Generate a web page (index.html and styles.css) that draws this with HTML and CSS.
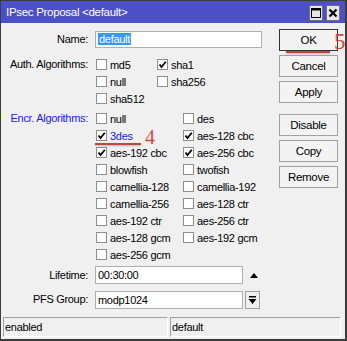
FILE: index.html
```
<!DOCTYPE html>
<html lang="en">
<head>
    <meta charset="UTF-8">
    <title>IPsec Proposal</title>
    <link rel="stylesheet" href="styles.css">
</head>
<body>
    <div class="window">
        <div class="titlebar">
            <span class="title">IPsec Proposal &lt;default&gt;</span>
            <div class="win-btns">
                <span class="wbtn">
                    <svg width="10" height="10" viewBox="0 0 10 10"><rect x="0.5" y="0.5" width="9" height="9" fill="none" stroke="#000" stroke-width="1"/><line x1="0" y1="1.5" x2="10" y2="1.5" stroke="#000" stroke-width="2"/></svg>
                </span>
                <span class="wbtn">
                    <svg width="10" height="10" viewBox="0 0 10 10"><path d="M1.5 1.5 L8.5 8.5 M8.5 1.5 L1.5 8.5" stroke="#000" stroke-width="2.2"/></svg>
                </span>
            </div>
        </div>

        <div class="content">
            <div class="form">
                <div class="row name-row">
                    <label class="lbl">Name:</label>
                    <div class="input name-input"><span class="sel">default</span></div>
                </div>

                <div class="row auth-row">
                    <label class="lbl">Auth. Algorithms:</label>
                    <div class="checks auth-checks">
                        <div class="chk"><span class="box"></span>md5</div>
                        <div class="chk"><span class="box on"><svg width="9" height="9" viewBox="0 0 9 9"><polyline points="1.5,4.5 3.5,7 7.8,1.8" fill="none" stroke="#000" stroke-width="1.8"/></svg></span>sha1</div>
                        <div class="chk"><span class="box"></span>null</div>
                        <div class="chk"><span class="box"></span>sha256</div>
                        <div class="chk"><span class="box"></span>sha512</div>
                    </div>
                </div>

                <div class="row encr-row">
                    <label class="lbl blue">Encr. Algorithms:</label>
                    <div class="checks encr-checks">
                        <div class="chk"><span class="box"></span>null</div>
                        <div class="chk"><span class="box"></span>des</div>
                        <div class="chk blue"><span class="box on"><svg width="9" height="9" viewBox="0 0 9 9"><polyline points="1.5,4.5 3.5,7 7.8,1.8" fill="none" stroke="#000" stroke-width="1.8"/></svg></span>3des</div>
                        <div class="chk"><span class="box on"><svg width="9" height="9" viewBox="0 0 9 9"><polyline points="1.5,4.5 3.5,7 7.8,1.8" fill="none" stroke="#000" stroke-width="1.8"/></svg></span>aes-128 cbc</div>
                        <div class="chk"><span class="box on"><svg width="9" height="9" viewBox="0 0 9 9"><polyline points="1.5,4.5 3.5,7 7.8,1.8" fill="none" stroke="#000" stroke-width="1.8"/></svg></span>aes-192 cbc</div>
                        <div class="chk"><span class="box on"><svg width="9" height="9" viewBox="0 0 9 9"><polyline points="1.5,4.5 3.5,7 7.8,1.8" fill="none" stroke="#000" stroke-width="1.8"/></svg></span>aes-256 cbc</div>
                        <div class="chk"><span class="box"></span>blowfish</div>
                        <div class="chk"><span class="box"></span>twofish</div>
                        <div class="chk"><span class="box"></span>camellia-128</div>
                        <div class="chk"><span class="box"></span>camellia-192</div>
                        <div class="chk"><span class="box"></span>camellia-256</div>
                        <div class="chk"><span class="box"></span>aes-128 ctr</div>
                        <div class="chk"><span class="box"></span>aes-192 ctr</div>
                        <div class="chk"><span class="box"></span>aes-256 ctr</div>
                        <div class="chk"><span class="box"></span>aes-128 gcm</div>
                        <div class="chk"><span class="box"></span>aes-192 gcm</div>
                        <div class="chk"><span class="box"></span>aes-256 gcm</div>
                    </div>
                    <!-- annotation over 3des -->
                    <span class="mark-line line-3des"></span>
                    <span class="mark-num num-4">4</span>
                </div>

                <div class="row life-row">
                    <label class="lbl">Lifetime:</label>
                    <div class="input short-input">00:30:00</div>
                    <span class="up-arrow"></span>
                </div>

                <div class="row pfs-row">
                    <label class="lbl">PFS Group:</label>
                    <div class="input short-input">modp1024</div>
                    <span class="drop-btn">
                        <svg width="9" height="9" viewBox="0 0 9 9"><rect x="1" y="0" width="7" height="1.5" fill="#000"/><polygon points="0.5,3 8.5,3 4.5,8" fill="#000"/></svg>
                    </span>
                </div>
            </div>

            <div class="buttons">
                <div class="btn btn-ok">OK</div>
                <div class="btn">Cancel</div>
                <div class="btn">Apply</div>
                <div class="btn sep">Disable</div>
                <div class="btn">Copy</div>
                <div class="btn">Remove</div>
                <span class="mark-line line-ok"></span>
                <span class="mark-num num-5">5</span>
            </div>
        </div>

        <div class="statusbar">
            <div class="panel panel-left">enabled</div>
            <div class="panel panel-right">default</div>
        </div>
    </div>
</body>
</html>
```

FILE: styles.css
```
body {
    margin: 0;
    font-family: "Liberation Sans", Arial, sans-serif;
    font-size: 11px;
    letter-spacing: -0.3px;
    color: #000;
    background: #fff;
}
.window {
    width: 347px;
    height: 341px;
    box-sizing: border-box;
    background: #f0f0f0;
    border-top: 1px solid #3c3c3c;
    border-left: 1px solid #3c3c3c;
    border-right: 2px solid #3c3c3c;
    border-bottom: 2px solid #3c3c3c;
    display: flex;
    flex-direction: column;
}
.titlebar {
    height: 22px;
    background: #4c50c6;
    display: flex;
    align-items: center;
    justify-content: space-between;
    padding: 0 5px 0 5px;
}
.title {
    color: #fff;
    font-size: 11.5px;
}
.win-btns {
    display: flex;
    gap: 3px;
    margin-top: 2px;
}
.wbtn {
    width: 12px;
    height: 14px;
    background: #e6e6e6;
    border: 1px solid #707070;
    display: flex;
    align-items: center;
    justify-content: center;
}
.content {
    display: flex;
}
.form {
    flex: 1;
    padding-top: 8px;
}
.row {
    display: flex;
    align-items: flex-start;
    position: relative;
}
.lbl {
    width: 87px;
    flex: none;
    text-align: right;
    margin-right: 7px;
    line-height: 17px;
}
.blue {
    color: #1a1ae6;
}
.input {
    height: 17px;
    box-sizing: border-box;
    background: #fff;
    border: 1px solid #b0b0b0;
    padding: 0 2px;
    line-height: 15px;
}
.name-input {
    width: 167px;
}
.sel {
    background: #3399ff;
    color: #fff;
    padding: 0 1px;
}
.short-input {
    width: 148px;
    height: 18px;
    line-height: 16px;
}
.auth-row {
    margin-top: 8px;
}
.encr-row {
    margin-top: 3px;
}
.checks {
    display: grid;
    grid-auto-rows: 17px;
}
.auth-checks {
    grid-template-columns: 61px 61px;
}
.encr-checks {
    grid-template-columns: 87px 87px;
}
.chk {
    display: flex;
    align-items: center;
    gap: 3px;
    padding-left: 1px;
}
.box {
    width: 11px;
    height: 11px;
    box-sizing: border-box;
    background: #fff;
    border: 1px solid #8e8e8e;
    display: flex;
    align-items: center;
    justify-content: center;
    flex: none;
}
.life-row {
    margin-top: 3px;
    align-items: center;
}
.up-arrow {
    width: 0;
    height: 0;
    margin-left: 7px;
    border-left: 4px solid transparent;
    border-right: 4px solid transparent;
    border-bottom: 5px solid #000;
}
.pfs-row {
    margin-top: 7px;
}
.drop-btn {
    width: 15px;
    height: 18px;
    box-sizing: border-box;
    margin-left: 2px;
    border: 1px solid #a0a0a0;
    background: #f0f0f0;
    display: flex;
    align-items: center;
    justify-content: center;
}
.buttons {
    width: 59px;
    margin-right: 7px;
    padding-top: 6px;
    display: flex;
    flex-direction: column;
    gap: 4px;
    position: relative;
}
.btn {
    height: 22px;
    box-sizing: border-box;
    border: 1px solid #a0a0a0;
    background: #f3f3f3;
    display: flex;
    align-items: center;
    justify-content: center;
    font-size: 11.5px;
}
.btn-ok {
    border-color: #333;
}
.btn.sep {
    margin-top: 7px;
}
.statusbar {
    display: flex;
    gap: 2px;
    margin-top: 8px;
    padding-left: 2px;
}
.panel {
    height: 20px;
    box-sizing: border-box;
    border-top: 1px solid #a0a0a0;
    border-left: 1px solid #a0a0a0;
    border-right: 1px solid #fff;
    border-bottom: 1px solid #fff;
    padding-left: 1px;
    line-height: 18px;
}
.panel-left {
    width: 165px;
}
.panel-right {
    width: 171px;
}

/* red annotations drawn over the dialog */
.mark-line {
    position: absolute;
    height: 2px;
    background: #c2463a;
    box-shadow: 0 1px 2px rgba(0, 0, 0, 0.25);
}
.mark-num {
    position: absolute;
    font-family: "Liberation Serif", serif;
    color: #cf4a3c;
    letter-spacing: 0;
}
.line-3des {
    left: 94px;
    top: 33px;
    width: 46px;
}
.num-4 {
    left: 144px;
    top: 21px;
    font-size: 20px;
    line-height: 13px;
}
.line-ok {
    left: 7px;
    top: 28px;
    width: 44px;
}
.num-5 {
    left: 55px;
    top: 11px;
    font-size: 23px;
    line-height: 16px;
}
```
